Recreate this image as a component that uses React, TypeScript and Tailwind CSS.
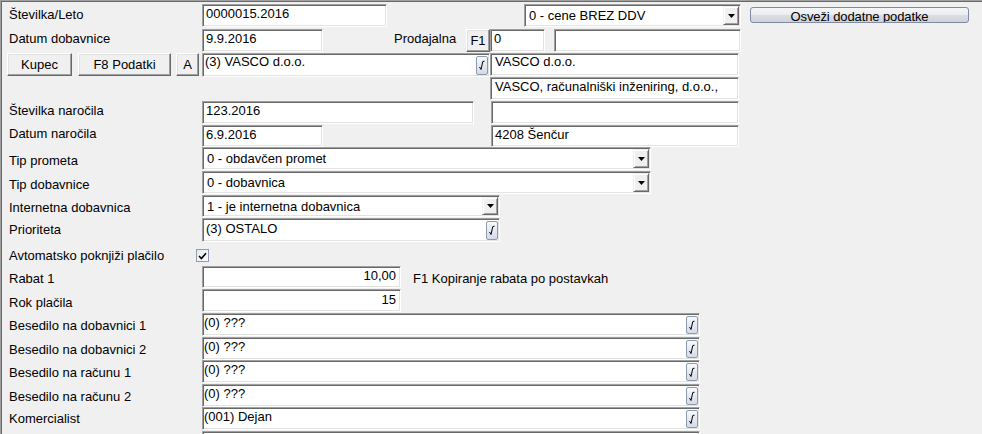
import type { ReactNode } from "react";

// sunken classic edit box
const sunken =
  "flex bg-white border border-t-[#a0a0a0] border-l-[#a0a0a0] border-b-white border-r-white shadow-[inset_1px_1px_0_#696969,inset_-1px_-1px_0_#e3e3e3]";

// raised classic push button
const raised =
  "flex items-center justify-center bg-[#f0f0f0] border border-t-white border-l-white border-b-[#696969] border-r-[#696969] shadow-[inset_-1px_-1px_0_#a0a0a0,inset_1px_1px_0_#e3e3e3]";

function Label({ children, pt, w = "w-[202px]" }: { children?: ReactNode; pt: string; w?: string }) {
  return <div className={`${w} shrink-0 pl-[9px] whitespace-nowrap ${pt}`}>{children}</div>;
}

function LookupButton() {
  return (
    <div className="mt-[2px] mb-[1px] mr-[1px] w-[12px] shrink-0 rounded-[2px] border border-[#8d99ad] bg-[linear-gradient(#f7f9fc,#d3dbe7)] flex items-center justify-center">
      <svg width="8" height="13" viewBox="0 0 8 13">
        <path d="M1.5 8 L3 10.5 L4.8 2.5 L6.5 2.2" fill="none" stroke="#000" strokeWidth="1" />
      </svg>
    </div>
  );
}

function DropButton() {
  return (
    <div className="m-[1px] w-[16px] shrink-0 flex items-center justify-center bg-[#f0f0f0] border border-t-[#f0f0f0] border-l-[#f0f0f0] border-b-[#696969] border-r-[#696969] shadow-[inset_1px_1px_0_#fff,inset_-1px_-1px_0_#a0a0a0]">
      <svg width="7" height="4" viewBox="0 0 7 4">
        <polygon points="0,0 7,0 3.5,4" fill="#000" />
      </svg>
    </div>
  );
}

function Edit({
  size,
  value = "",
  right = false,
  lookup = false,
  pad = "pl-[3px] pt-[1px]",
  className = "",
}: {
  size: string;
  value?: string;
  right?: boolean;
  lookup?: boolean;
  pad?: string;
  className?: string;
}) {
  return (
    <div className={`${sunken} ${size} shrink-0 ${className}`}>
      <span className={`flex-1 overflow-hidden whitespace-nowrap ${pad} ${right ? "text-right pr-[4px]" : ""}`}>
        {value}
      </span>
      {lookup && <LookupButton />}
    </div>
  );
}

function Combo({ size, value, className = "" }: { size: string; value: string; className?: string }) {
  return (
    <div className={`${sunken} ${size} shrink-0 ${className}`}>
      <span className="flex-1 overflow-hidden whitespace-nowrap pl-[4px] pt-[3px]">{value}</span>
      <DropButton />
    </div>
  );
}

function Button({ size, children, className = "" }: { size: string; children: ReactNode; className?: string }) {
  return <div className={`${raised} ${size} shrink-0 ${className}`}>{children}</div>;
}

export default function App() {
  return (
    <div className="w-[982px] h-[434px] overflow-hidden bg-[#f0f0f0] shadow-[inset_1px_1px_0_#a0a0a0,inset_2px_2px_0_#696969] pt-[4px] font-['Liberation_Sans',Arial,sans-serif] text-[13px] leading-[16px] text-black">
      <div className="flex h-[25px]">
        <Label pt="pt-[3px]">Številka/Leto</Label>
        <Edit size="w-[185px] h-[23px]" value="0000015.2016" />
        <Combo size="w-[217px] h-[23px]" value="0 - cene BREZ DDV" className="ml-[137px]" />
        <div className="ml-[9px] mt-[3px] w-[219px] h-[16px] overflow-hidden rounded-[3px] border border-[#7d8ca3] bg-[linear-gradient(#f4f5f7_0%,#ebecef_50%,#dcdee3_50%,#cfd3da_100%)] text-center leading-[17px] -tracking-[0.1px]">
          Osveži dodatne podatke
        </div>
      </div>

      <div className="flex h-[24px]">
        <Label pt="pt-[2px]">Datum dobavnice</Label>
        <Edit size="w-[121px] h-[23px]" value="9.9.2016" />
        <div className="ml-[71px] w-[72px] shrink-0 pt-[2px]">Prodajalna</div>
        <Button size="w-[24px] h-[23px]">F1</Button>
        <Edit size="w-[55px] h-[23px]" value="0" />
        <Edit size="w-[187px] h-[23px]" className="ml-[9px]" />
      </div>

      <div className="flex h-[24px] pl-[7px]">
        <Button size="w-[65px] h-[23px]">Kupec</Button>
        <Button size="w-[93px] h-[23px]" className="ml-[6px]">F8 Podatki</Button>
        <Button size="w-[23px] h-[23px]" className="ml-[5px]">A</Button>
        <Edit size="w-[288px] h-[24px]" value="(3) VASCO d.o.o." lookup pad="pl-[2px] pt-[0px]" className="ml-[3px]" />
        <Edit size="w-[249px] h-[23px]" value="VASCO d.o.o." pad="pl-[4px] pt-[0px]" />
      </div>

      <div className="flex h-[24px] pl-[490px]">
        <Edit size="w-[249px] h-[23px]" value="VASCO, računalniški inženiring, d.o.o.," pad="pl-[4px] pt-[1px]" />
      </div>

      <div className="flex h-[24px]">
        <Label pt="pt-[2px]">Številka naročila</Label>
        <Edit size="w-[272px] h-[23px]" value="123.2016" />
        <Edit size="w-[248px] h-[23px]" className="ml-[17px]" />
      </div>

      <div className="flex h-[22px]">
        <Label pt="pt-[1px]">Datum naročila</Label>
        <Edit size="w-[121px] h-[22px]" value="6.9.2016" />
        <Edit size="w-[248px] h-[22px]" value="4208 Šenčur" className="ml-[168px]" />
      </div>

      <div className="flex h-[24px]">
        <Label pt="pt-[6px]">Tip prometa</Label>
        <Combo size="w-[449px] h-[23px]" value="0 - obdavčen promet" />
      </div>

      <div className="flex h-[24px]">
        <Label pt="pt-[6px]">Tip dobavnice</Label>
        <Combo size="w-[449px] h-[23px]" value="0 - dobavnica" />
      </div>

      <div className="flex h-[23px]">
        <Label pt="pt-[5px]">Internetna dobavnica</Label>
        <Combo size="w-[298px] h-[22px]" value="1 - je internetna dobavnica" />
      </div>

      <div className="flex h-[24px]">
        <Label pt="pt-[4px]">Prioriteta</Label>
        <Edit size="w-[298px] h-[24px]" value="(3) OSTALO" lookup pad="pl-[3px] pt-[2px]" />
      </div>

      <div className="flex h-[24px]">
        <Label pt="pt-[6px]" w="w-[196px]">Avtomatsko poknjiži plačilo</Label>
        <div className="mt-[7px] w-[13px] h-[13px] shrink-0 border border-[#8e9bb3] bg-[linear-gradient(135deg,#e6e9ee,#fbfbfc)] flex items-center justify-center">
          <svg width="9" height="8" viewBox="0 0 9 8">
            <path d="M1 4 L3.4 6.5 L8 1.2" fill="none" stroke="#000" strokeWidth="1.6" />
          </svg>
        </div>
      </div>

      <div className="flex h-[23px]">
        <Label pt="pt-[5px]">Rabat 1</Label>
        <Edit size="w-[199px] h-[22px]" value="10,00" right pad="pt-[1px]" />
        <div className="ml-[12px] pt-[5px] whitespace-nowrap">F1 Kopiranje rabata po postavkah</div>
      </div>

      <div className="flex h-[24px]">
        <Label pt="pt-[6px]">Rok plačila</Label>
        <Edit size="w-[199px] h-[23px]" value="15" right pad="pt-[2px]" />
      </div>

      <div className="flex h-[24px]">
        <Label pt="pt-[5px]">Besedilo na dobavnici 1</Label>
        <Edit size="w-[498px] h-[23px]" value="(0) ???" lookup pad="pl-[1px] pt-[1px]" />
      </div>
      <div className="flex h-[23px]">
        <Label pt="pt-[5px]">Besedilo na dobavnici 2</Label>
        <Edit size="w-[498px] h-[23px]" value="(0) ???" lookup pad="pl-[1px] pt-[1px]" />
      </div>
      <div className="flex h-[24px]">
        <Label pt="pt-[5px]">Besedilo na računu 1</Label>
        <Edit size="w-[498px] h-[23px]" value="(0) ???" lookup pad="pl-[1px] pt-[1px]" />
      </div>
      <div className="flex h-[23px]">
        <Label pt="pt-[5px]">Besedilo na računu 2</Label>
        <Edit size="w-[498px] h-[23px]" value="(0) ???" lookup pad="pl-[1px] pt-[1px]" />
      </div>
      <div className="flex h-[24px]">
        <Label pt="pt-[4px]">Komercialist</Label>
        <Edit size="w-[498px] h-[23px]" value="(001) Dejan" lookup pad="pl-[1px] pt-[1px]" />
      </div>

      {/* next row, scrolled below the edge */}
      <div className="flex h-[24px]">
        <Label pt="pt-[5px]" />
        <Edit size="w-[498px] h-[23px]" lookup />
      </div>
    </div>
  );
}
